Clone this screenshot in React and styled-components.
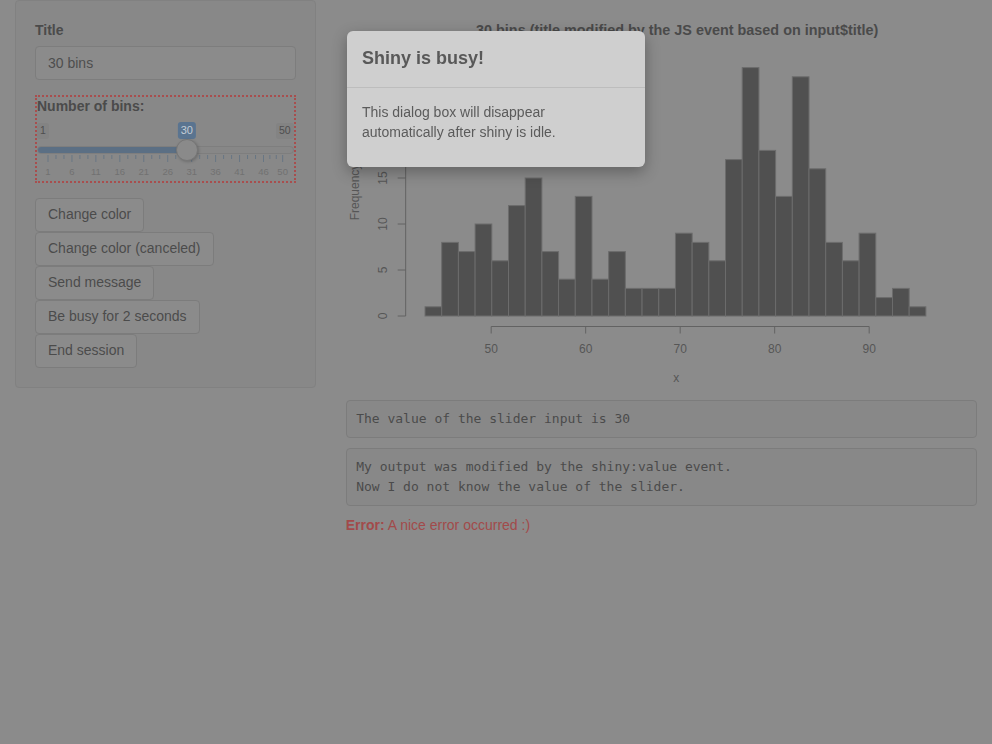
import React from 'react'
import styled, { createGlobalStyle } from 'styled-components'

const counts = [1, 8, 7, 10, 6, 12, 15, 7, 4, 13, 4, 7, 3, 3, 3, 9, 8, 6, 17, 27, 18, 13, 26, 16, 8, 6, 9, 2, 3, 1]
const buttons = ['Change color', 'Change color (canceled)', 'Send message', 'Be busy for 2 seconds', 'End session']

const GlobalStyle = createGlobalStyle`
    body{
        margin:0;
        background:#8b8b8b;
        font-family:"Liberation Sans", Helvetica, Arial, sans-serif;
        font-size:14px;
        line-height:1.42857;
        color:#4b4b4b;
    }
    *{box-sizing:border-box;}
`

// slider helpers
const sliderMin = 1
const sliderMax = 50
const sliderValue = 30
const frac = (v) => (v - sliderMin) / (sliderMax - sliderMin)
const pos = (v) => `calc(11px + (100% - 22px) * ${frac(v)})`

const gridMajors = [1, 6, 11, 16, 21, 26, 31, 36, 41, 46, 50]

const Slider = () => {
    const ticks = []
    gridMajors.forEach((m, i) => {
        ticks.push({ v: m, major: true })
        const next = gridMajors[i + 1]
        if (next) {
            ticks.push({ v: m + (next - m) / 3, major: false })
            ticks.push({ v: m + (2 * (next - m)) / 3, major: false })
        }
    })
    return (
        <SliderBox>
            <LabelRow>
                <EdgeLabel>{sliderMin}</EdgeLabel>
                <ValueLabel style={{ left: pos(sliderValue) }}>{sliderValue}</ValueLabel>
                <EdgeLabel>{sliderMax}</EdgeLabel>
            </LabelRow>
            <TrackArea>
                <Track>
                    <Fill style={{ width: pos(sliderValue) }} />
                </Track>
                <Handle style={{ left: pos(sliderValue) }} />
            </TrackArea>
            <Scale>
                <svg width="100%" height="26" overflow="visible">
                    {ticks.map((t, i) => (
                        <line
                            key={i}
                            x1={`${frac(t.v) * 100}%`}
                            x2={`${frac(t.v) * 100}%`}
                            y1="0"
                            y2={t.major ? 7 : 4}
                            stroke="#687684"
                            strokeWidth="1"
                        />
                    ))}
                    {gridMajors.map((m) => (
                        <text key={m} x={`${frac(m) * 100}%`} y="20" textAnchor="middle" fontSize="9.5" fill="#717171">
                            {m}
                        </text>
                    ))}
                </svg>
            </Scale>
        </SliderBox>
    )
}

const Histogram = () => {
    const ox = 346
    const X = (v) => 491 - ox + (v - 50) * 9.45
    const Y = (c) => 316 - c * 9.2
    const step = (96 - 43) / 30
    return (
        <PlotSvg viewBox="0 0 631 400">
            <text x={331} y={35} textAnchor="middle" fontSize="14.4" fontWeight="bold" fill="#4a4a4a">
                30 bins (title modified by the JS event based on input$title)
            </text>
            {counts.map((c, i) => (
                <rect
                    key={i}
                    x={X(43 + i * step)}
                    y={Y(c)}
                    width={X(43 + (i + 1) * step) - X(43 + i * step)}
                    height={c * 9.2}
                    fill="#505050"
                    stroke="#6c6c6c"
                    strokeWidth="1"
                />
            ))}
            <g stroke="#626262" strokeWidth="1" fill="none">
                <line x1={X(50)} y1={326.5} x2={X(90)} y2={326.5} />
                {[50, 60, 70, 80, 90].map((v) => (
                    <line key={v} x1={X(v)} y1={326.5} x2={X(v)} y2={333.5} />
                ))}
                <line x1={59.5} y1={Y(0)} x2={59.5} y2={Y(25)} />
                {[0, 5, 10, 15, 20, 25].map((c) => (
                    <line key={c} x1={51.5} y1={Y(c)} x2={59.5} y2={Y(c)} />
                ))}
            </g>
            <g fontSize="12" fill="#565656" textAnchor="middle">
                {[50, 60, 70, 80, 90].map((v) => (
                    <text key={v} x={X(v)} y={353}>{v}</text>
                ))}
                {[0, 5, 10, 15, 20, 25].map((c) => (
                    <text key={c} x={0} y={0} transform={`translate(41 ${Y(c)}) rotate(-90)`}>{c}</text>
                ))}
                <text x={330} y={382}>x</text>
                <text x={0} y={0} transform="translate(13 192) rotate(-90)">Frequency</text>
            </g>
        </PlotSvg>
    )
}

export default function App() {
    return (
        <>
            <GlobalStyle />
            <Page>
                <Sidebar>
                    <FormGroup>
                        <Label>Title</Label>
                        <TextInput defaultValue="30 bins" />
                    </FormGroup>
                    <FormGroup $outlined>
                        <Label>Number of bins:</Label>
                        <Slider />
                    </FormGroup>
                    <ButtonStack>
                        {buttons.map((b) => (
                            <Button key={b}>{b}</Button>
                        ))}
                    </ButtonStack>
                </Sidebar>
                <Main>
                    <Histogram />
                    <Pre>The value of the slider input is 30</Pre>
                    <Pre>{'My output was modified by the shiny:value event.\nNow I do not know the value of the slider.'}</Pre>
                    <ErrorText><b>Error:</b> A nice error occurred :)</ErrorText>
                </Main>
            </Page>
            <Modal>
                <ModalHeader>
                    <ModalTitle>Shiny is busy!</ModalTitle>
                </ModalHeader>
                <ModalBody>
                    <p>This dialog box will disappear automatically after shiny is idle.</p>
                </ModalBody>
            </Modal>
        </>
    )
}

const Page = styled.div`
    padding:0 15px;
    display:grid;
    grid-template-columns:calc((100% + 30px) / 3 - 30px) 1fr;
    column-gap:30px;
    align-items:start;
`;
const Sidebar = styled.div`
    background:#888888;
    border:1px solid #818181;
    border-radius:4px;
    padding:20px 19px 19px;
    margin-bottom:20px;
`;
const FormGroup = styled.div`
    margin-bottom:15px;
    border:${(p) => (p.$outlined ? '2px dotted #a84e4e' : 'none')};
`;
const Label = styled.label`
    display:block;
    font-weight:bold;
    margin-bottom:5px;
    color:#4b4b4b;
`;
const TextInput = styled.input`
    display:block;
    width:100%;
    height:34px;
    padding:6px 12px;
    font-family:inherit;
    font-size:14px;
    color:#4e4e4e;
    background:#8b8b8b;
    border:1px solid #7d7d7d;
    border-radius:4px;
    outline:none;
`;
const SliderBox = styled.div`
    display:flex;
    flex-direction:column;
`;
const LabelRow = styled.div`
    position:relative;
    display:flex;
    justify-content:space-between;
    align-items:flex-start;
    height:17px;
    padding-top:1px;
`;
const EdgeLabel = styled.span`
    font-size:10.5px;
    line-height:1.333;
    padding:1px 3px;
    background:#838383;
    color:#4e4e4e;
    border-radius:3px;
`;
const ValueLabel = styled.span`
    position:absolute;
    top:0;
    transform:translateX(-50%);
    font-size:11px;
    line-height:1.333;
    padding:1px 3px;
    background:#5a7490;
    color:#c3ccd5;
    border-radius:3px;
`;
const TrackArea = styled.div`
    position:relative;
    margin-top:7px;
`;
const Track = styled.div`
    height:8px;
    border-radius:4px;
    overflow:hidden;
    background:#878787;
    border:1px solid #7e7e7e;
`;
const Fill = styled.div`
    height:100%;
    margin:-1px 0 0 -1px;
    box-sizing:content-box;
    padding:1px 0;
    background:#5b6f84;
`;
const Handle = styled.div`
    position:absolute;
    top:-7px;
    width:22px;
    height:22px;
    margin-left:-11px;
    border-radius:50%;
    background:#8a8a8a;
    border:1px solid #767676;
    box-shadow:1px 1px 3px rgba(0,0,0,0.2);
`;
const Scale = styled.div`
    padding:0 11px;
    margin-top:1px;
    height:26px;
    & svg{
        display:block;
        font-family:"Liberation Sans", Helvetica, Arial, sans-serif;
    }
`;
const ButtonStack = styled.div`
    display:flex;
    flex-direction:column;
    align-items:flex-start;
`;
const Button = styled.button`
    display:inline-block;
    padding:6px 12px;
    font-family:inherit;
    font-size:14px;
    line-height:1.42857;
    color:#4b4b4b;
    background:#8b8b8b;
    border:1px solid #7c7c7c;
    border-radius:4px;
`;
const Main = styled.div`
    min-width:0;
`;
const PlotSvg = styled.svg`
    display:block;
    width:100%;
    height:400px;
    font-family:"Liberation Sans", Helvetica, Arial, sans-serif;
`;
const Pre = styled.pre`
    margin:0 0 10px;
    padding:8px 9.5px;
    font-family:"DejaVu Sans Mono", Menlo, monospace;
    font-size:13px;
    line-height:20px;
    color:#4b4b4b;
    background:#888888;
    border:1px solid #7c7c7c;
    border-radius:4px;
    white-space:pre-wrap;
`;
const ErrorText = styled.div`
    color:#a24a4a;
`;
const Modal = styled.div`
    position:fixed;
    left:347px;
    top:31px;
    width:298px;
    background:#cfcfcf;
    border-radius:6px;
    box-shadow:0 5px 15px rgba(0,0,0,0.3);
`;
const ModalHeader = styled.div`
    padding:15px;
    border-bottom:1px solid #bdbdbd;
`;
const ModalTitle = styled.h4`
    margin:0;
    font-size:18px;
    line-height:1.42857;
    font-weight:bold;
    color:#595959;
`;
const ModalBody = styled.div`
    padding:15px;
    color:#5b5b5b;
    & p{
        margin:0 0 9px;
    }
`;
